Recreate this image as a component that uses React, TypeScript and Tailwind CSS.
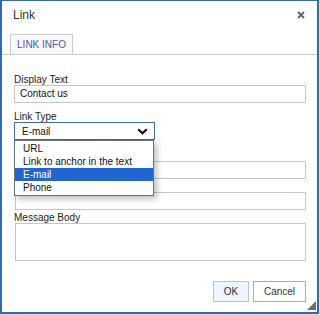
import { useState } from "react";

const FONT = { fontFamily: '"Liberation Sans", Arial, sans-serif' };

const linkTypes = ["URL", "Link to anchor in the text", "E-mail", "Phone"];

function Field({
  label,
  className = "",
  children,
}: {
  label?: string;
  className?: string;
  children: React.ReactNode;
}) {
  return (
    <div className={className}>
      <div className="h-[13px] text-[10px] leading-[15px] text-[#222]">{label}</div>
      {children}
    </div>
  );
}

function TextBox({ value = "" }: { value?: string }) {
  return (
    <div className="h-[18px] border border-[#c3c7cc] bg-white pl-[5px] text-[10px] leading-[16px] text-[#111]">
      {value}
    </div>
  );
}

export default function App() {
  const [type] = useState("E-mail");

  return (
    <div className="h-[315px] w-[320px] bg-[#d9e1ee]" style={FONT}>
      <div className="relative flex h-[314px] w-[319px] flex-col border-x-2 border-b-2 border-t border-[#3567b7] bg-white">
        {/* header */}
        <div className="flex h-[28px] items-center justify-between pl-[11px] pr-[12px]">
          <span className="text-[12px] text-[#333]">Link</span>
          <svg width="8" height="8" viewBox="0 0 8 8" className="text-[#666]">
            <path d="M1 1L7 7M7 1L1 7" stroke="currentColor" strokeWidth="2" />
          </svg>
        </div>

        {/* tabs */}
        <div className="mt-[5px] flex h-[21px] border-b border-[#cccccc] pl-[8px]">
          <div className="flex h-[20px] w-[63px] items-center justify-center border-x border-t border-[#cccccc] bg-[#f8f8f8] text-[10px] text-[#4e5aa5]">
            LINK INFO
          </div>
        </div>

        {/* body */}
        <div className="relative flex flex-col pl-[12px] pr-[11px]">
          <Field label="Display Text" className="mt-[17px]">
            <TextBox value="Contact us" />
          </Field>

          <Field label="Link Type" className="mt-[6px]">
            <div className="flex h-[18px] w-[141px] items-center justify-between border border-[#3d69b5] bg-white pl-[7px] pr-[6px] text-[10px] text-[#111]">
              <span>{type}</span>
              <svg width="11" height="7" viewBox="0 0 11 7">
                <path d="M1.2 1.2L5.5 5.3L9.8 1.2" fill="none" stroke="#111" strokeWidth="2.2" />
              </svg>
            </div>
          </Field>

          {/* fields whose labels sit under the open list */}
          <Field className="mt-[8px]">
            <div className="pl-px">
              <TextBox />
            </div>
          </Field>

          <Field>
            <div className="pl-px">
              <TextBox />
            </div>
          </Field>

          <Field label="Message Body">
            <div className="pl-px">
              <div className="h-[38px] border border-[#c3c7cc] bg-white" />
            </div>
          </Field>

          <div className="mt-[20px] flex justify-end gap-[4px]">
            <button className="h-[21px] w-[36px] border border-[#a9c6ee] bg-[#eef5fd] text-[10px] text-[#333]">
              OK
            </button>
            <button className="h-[21px] w-[53px] border border-[#adadad] bg-white text-[10px] text-[#333]">
              Cancel
            </button>
          </div>

          {/* open dropdown list */}
          <div className="absolute left-[12px] top-[85px] w-[140px] border border-[#707070] bg-white py-px shadow-[3px_3px_6px_rgba(0,0,0,0.25)]">
            {linkTypes.map((t) => (
              <div
                key={t}
                className={`h-[13px] pl-[8px] text-[10px] leading-[13px] ${
                  t === type ? "bg-[#1f66d1] text-white" : "text-[#111]"
                }`}
              >
                {t}
              </div>
            ))}
          </div>
        </div>

        {/* resize grip */}
        <svg
          width="9"
          height="9"
          viewBox="0 0 9 9"
          className="absolute bottom-[2px] right-[1px]"
        >
          <path d="M9 0L9 9L0 9Z" fill="#6b6b6b" />
        </svg>
      </div>
    </div>
  );
}
